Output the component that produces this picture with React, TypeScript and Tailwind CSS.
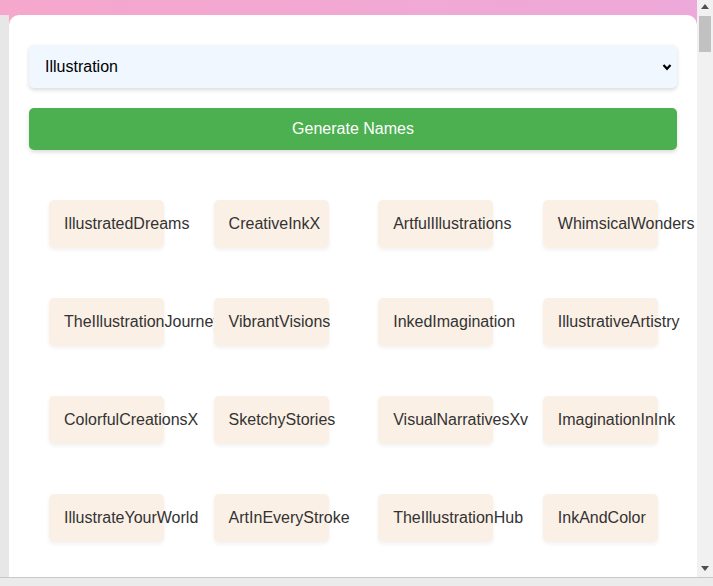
import { useState } from "react";

const names = [
  "IllustratedDreams",
  "CreativeInkX",
  "ArtfulIllustrations",
  "WhimsicalWonders",
  "TheIllustrationJourney",
  "VibrantVisions",
  "InkedImagination",
  "IllustrativeArtistry",
  "ColorfulCreationsX",
  "SketchyStories",
  "VisualNarrativesXv",
  "ImaginationInInk",
  "IllustrateYourWorld",
  "ArtInEveryStroke",
  "TheIllustrationHub",
  "InkAndColor",
];

function Scrollbar() {
  return (
    <div className="flex w-[16px] shrink-0 flex-col items-center bg-[#f1f1f1]">
      <svg className="mt-[4px] h-[5px] w-[8px]" viewBox="0 0 8 5" fill="#505050">
        <path d="M4 0 8 5H0Z" />
      </svg>
      <div className="mt-[7px] h-[36px] w-[12px] bg-[#c1c1c1]" />
      <div className="flex-1" />
      <svg className="mb-[6px] h-[5px] w-[8px]" viewBox="0 0 8 5" fill="#505050">
        <path d="M0 0H8L4 5Z" />
      </svg>
    </div>
  );
}

export default function App() {
  const [category, setCategory] = useState("Illustration");

  return (
    <div className="flex h-[586px] w-[713px] flex-col bg-[#ebebeb] font-['Liberation_Sans',Arial,sans-serif]">
      <div className="flex h-[577px] shrink-0">
        <div className="min-w-0 flex-1 overflow-hidden bg-gradient-to-r from-[#f6a7cc] to-[#eda9da]">
          <div className="flex h-full pt-[15px]">
            <div className="w-[9px] shrink-0 bg-[#e7e7e8]" />
            <div className="min-w-0 flex-1 rounded-t-[10px] bg-white px-5 pt-[30px]">
              <div className="relative">
                <select
                  value={category}
                  onChange={(e) => setCategory(e.target.value)}
                  className="h-[43px] w-full appearance-none rounded-[5px] bg-[#f0f7ff] pl-4 text-[16px] text-black shadow-[0_2px_4px_rgba(0,0,0,0.15)] outline-none"
                >
                  <option>Illustration</option>
                  <option>Gaming</option>
                  <option>Photography</option>
                </select>
                <svg className="pointer-events-none absolute right-[5px] top-[17px] h-[10px] w-[10px]" viewBox="0 0 10 10" fill="none" stroke="black" strokeWidth="2.2">
                  <path d="M1.5 3 5 6.8 8.5 3" />
                </svg>
              </div>
              <button className="mt-5 h-[42px] w-full rounded-[5px] bg-[#4caf50] text-[16px] text-white shadow-[0_2px_4px_rgba(0,0,0,0.15)]">
                Generate Names
              </button>
              <div className="ml-5 mt-[50px] grid grid-cols-[repeat(4,115px)] gap-x-[49.6px] gap-y-[50px]">
                {names.map((n) => (
                  <div
                    key={n}
                    className="flex h-[48px] w-[115px] items-center whitespace-nowrap rounded-[5px] bg-[#fbf0e6] px-[15px] text-[16px] text-[#333] shadow-[0_2px_4px_rgba(0,0,0,0.06)]"
                  >
                    {n}
                  </div>
                ))}
              </div>
            </div>
          </div>
        </div>
        <Scrollbar />
      </div>
      <div className="flex-1 border-t border-[#c8c8c8] bg-[#ebebeb]" />
    </div>
  );
}
